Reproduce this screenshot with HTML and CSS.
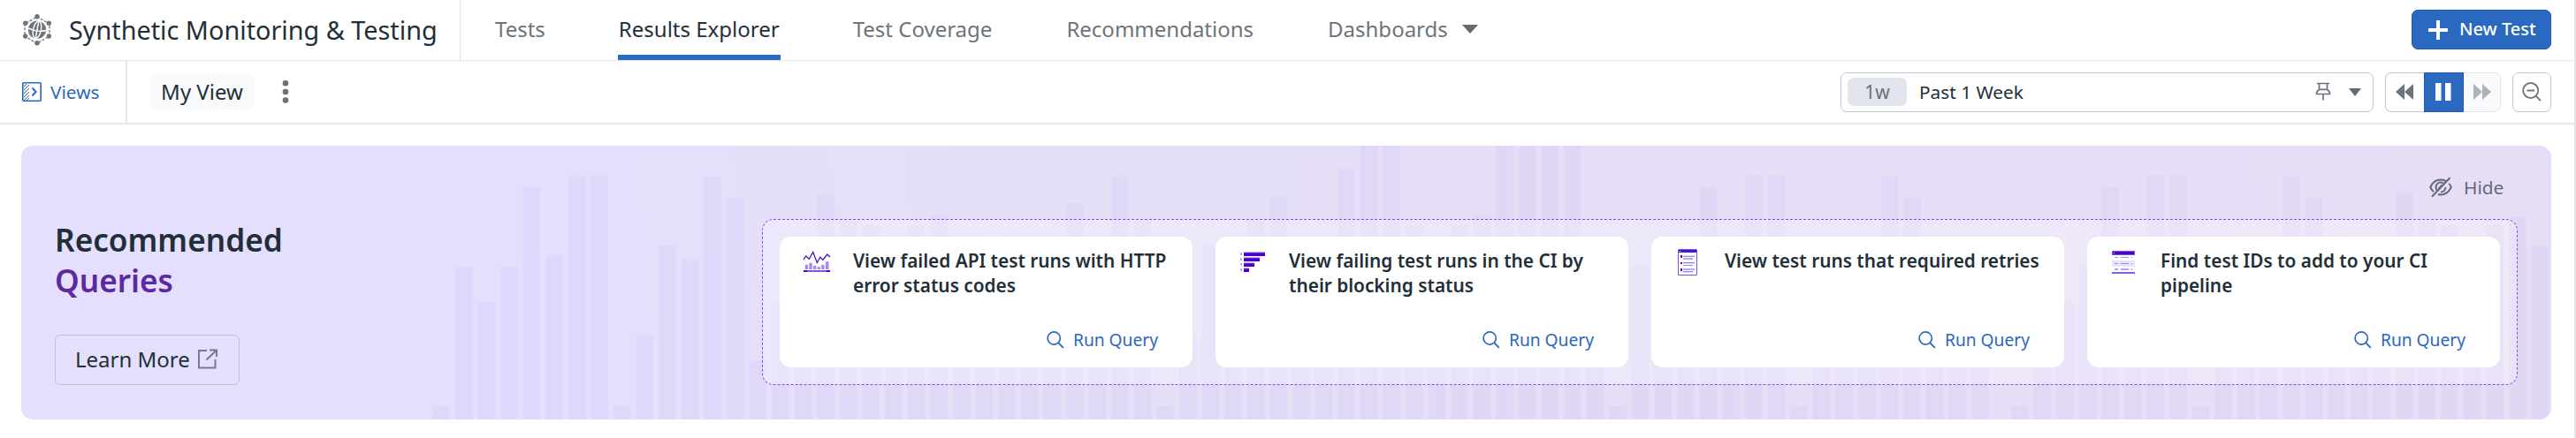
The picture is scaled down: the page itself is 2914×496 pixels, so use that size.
FILE: index.html
```html
<!DOCTYPE html>
<html lang="en">
<head>
<meta charset="utf-8">
<title>Synthetic Monitoring &amp; Testing</title>
<link rel="stylesheet" href="styles.css">
</head>
<body>
<svg class="defs" width="0" height="0">
  <symbol id="search" viewBox="0 0 20 20"><circle cx="8.2" cy="8" r="7.1" fill="none" stroke="currentColor" stroke-width="1.7"/><path d="M13.2 13.2L18.8 18.9" stroke="currentColor" stroke-width="1.9"/></symbol>
</svg>
<header class="topbar">
  <div class="brand">
    <svg class="brand-icon" width="34" height="38" viewBox="0 0 34 38">
      <path d="M17 4L31 12V26L17 34L3 26V12Z" fill="none" stroke="#6c747c" stroke-width="1.3" stroke-dasharray="3 1.6"/>
      <g fill="#6c747c"><circle cx="17" cy="3.7" r="2.7"/><circle cx="30.3" cy="11.3" r="2.7"/><circle cx="30.3" cy="26" r="2.7"/><circle cx="17" cy="33.7" r="2.7"/><circle cx="3.7" cy="26" r="2.7"/><circle cx="3.7" cy="11.3" r="2.7"/><circle cx="17" cy="18.7" r="10.2"/></g>
      <g fill="none" stroke="#fff" stroke-width="1.4"><ellipse cx="17" cy="18.7" rx="4.4" ry="10" transform="rotate(12 17 18.7)"/><path d="M19 8L15 29M7 17Q17 22 27 19.500"/></g>
    </svg>
    <h1 class="brand-title">Synthetic Monitoring &amp; Testing</h1>
  </div>
  <nav class="tabs">
    <a class="tab">Tests</a>
    <a class="tab active">Results Explorer</a>
    <a class="tab">Test Coverage</a>
    <a class="tab">Recommendations</a>
    <a class="tab">Dashboards<span class="caret"></span></a>
  </nav>
  <button class="new-test"><svg width="22" height="22" viewBox="0 0 22 22"><path d="M11 0V22M0 11H22" stroke="#fff" stroke-width="4"/></svg><span>New Test</span></button>
</header>
<div class="toolbar">
  <div class="views">
    <svg width="22" height="22" viewBox="0 0 22 22" fill="none" stroke="#2b68bf"><path d="M2 5L5 2M2 9L8 3M2 13L8 7M2 17L8 11M2 21L8 15M5 21L8 18" stroke-width="1"/><rect x=".8" y=".8" width="20.400" height="20.400" rx="1" stroke-width="1.600"/><path d="M11.500 6.500L15.500 11L11.500 15.500" stroke-width="2"/></svg>
    <span>Views</span>
  </div>
  <div class="my-view">My View</div>
  <svg class="kebab" width="8" height="28" viewBox="0 0 8 28" fill="#697077"><circle cx="4" cy="4.300" r="3.300"/><circle cx="4" cy="14" r="3.300"/><circle cx="4" cy="23.500" r="3.300"/></svg>
  <div class="time-select">
    <span class="pill">1w</span><span class="time-label">Past 1 Week</span>
    <svg class="pin" width="18" height="22" viewBox="0 0 18 22" fill="none" stroke="#6c747c" stroke-width="1.700"><path d="M2 1.500H16M4.500 1.500V8.500M13.500 1.500V8.500M4.500 8.300H13.500M4.500 8.500Q1.500 10 1.500 13.500H16.500Q16.500 10 13.500 8.500M9 13.500V20.500"/></svg>
    <span class="caret small"></span>
  </div>
  <div class="playback">
    <span class="pb"><svg width="20" height="20" viewBox="0 0 20 20" fill="#6c747c"><path d="M10 1V19L0 10ZM20 1V19L10 10Z"/></svg></span>
    <span class="pb on"><svg width="18" height="20" viewBox="0 0 18 20" fill="#fff"><path d="M0 0H6.500V20H0ZM11 0H17.500V20H11Z"/></svg></span>
    <span class="pb off"><svg width="20" height="20" viewBox="0 0 20 20" fill="#adb2b6"><path d="M0 1V19L10 10ZM10 1V19L20 10Z"/></svg></span>
  </div>
  <div class="zoom-out"><svg width="22" height="22" viewBox="0 0 22 22" fill="none" stroke="#6c747c" stroke-width="1.800"><circle cx="9.700" cy="9.500" r="8.500"/><path d="M5.500 9.500H14M15.800 15.700L21 21.200"/></svg></div>
</div>
<main class="content">
  <section class="banner">
    <svg class="bars" id="bars" width="2862" height="310" viewBox="24 165 2862 310"></svg>
    <div class="intro">
      <h2>Recommended<br><em>Queries</em></h2>
      <a class="learn">Learn More<svg width="22" height="23" viewBox="0 0 22 23" fill="none" stroke="#777a8c" stroke-width="2"><path d="M10 2H1V21.500H19.500V12M13 1.500H21V9M20.500 2L9.500 12.500"/></svg></a>
    </div>
    <div class="main">
      <div class="hide"><svg width="26" height="24" viewBox="0 0 26 24" fill="none" stroke="#646a7b" stroke-width="2"><path d="M19.500 5.600Q16.800 3.500 13 3.500C7 3.500 3 8 1.200 12Q2.500 15 5 17.200M10 20Q11.500 20.500 13 20.500C19 20.500 23 16 24.800 12Q24 9.800 22.300 7.900M3 22.700L23.500 1.300M8.800 16Q7.500 14.300 7.500 12A5.500 5.500 0 0 1 15.800 7.300M18.500 12A5.500 5.500 0 0 1 13 17.500M10.500 14L14.500 9.500"/></svg><span>Hide</span></div>
      <div class="queries">
        <article class="card">
          <svg class="card-icon" width="40" height="40" viewBox="0 0 40 40"><path d="M7 19L9.700 15L13.300 18.300L17.700 10.500L22.300 22.500L25.800 16.300L28.900 19.200L33.800 13L36.800 16" fill="none" stroke="#4a0fc4" stroke-width="1.300"/><path d="M8.800 24.700h3.300V30h-3.300zM13.300 22.700h3.500V30h-3.500zM18 26h3.300V30H18zM22.600 27.300h3.300V30h-3.300zM27.100 24.700h3.500V30h-3.500zM32 21.300h3.500V30H32z" fill="#a08bf8"/><path d="M7 31H37V33H7Z" fill="#8a50e0"/><path d="M7 31h4v2H7zM33 31h4v2h-4z" fill="#4a00cc"/></svg>
          <h3>View failed API test runs with HTTP error status codes</h3>
          <a class="run"><svg width="20" height="20"><use href="#search"/></svg>Run Query</a>
        </article>
        <article class="card">
          <svg class="card-icon" width="40" height="40" viewBox="0 0 40 40"><path d="M12 11h24v4H12zM12 17h18v4H12zM12 23h12v4H12zM12 29h6v4h-6z" fill="#4a00cc"/><path d="M12 11h24M12 17h18M12 23h12M12 29h6" stroke="#8253dd" stroke-width="1"/><path d="M8 11h2v3H8zM8 17h2v3H8zM8 23h2v3H8zM8 29h2v3H8z" fill="#b9aaf8"/></svg>
          <h3>View failing test runs in the CI by their blocking status</h3>
          <a class="run"><svg width="20" height="20"><use href="#search"/></svg>Run Query</a>
        </article>
        <article class="card">
          <svg class="card-icon" width="40" height="40" viewBox="0 0 40 40"><rect x="10.500" y="7.500" width="21" height="29" rx=".5" fill="#fff" stroke="#7b50d8"/><path d="M11 8H31V11H11Z" fill="#4617c4"/><path d="M12 9h1v1h-1z" fill="#fff"/><path d="M13 14h2v3h-2zM13 22h2v2h-2zM13 29h2v3h-2z" fill="#4a00cc"/><path d="M16 15h13v1H16zM16 22h13v1H16zM16 25h11v1H16zM16 32h11v1H16z" fill="#9580f5"/><path d="M16 17h11v2H16zM16 29h13v2H16z" fill="#b7a9fa"/><path d="M16 14h13v1H16zM16 23h13v1H16zM16 33h11v1H16z" fill="#ddd6fd"/></svg>
          <h3>View test runs that required retries</h3>
          <a class="run"><svg width="20" height="20"><use href="#search"/></svg>Run Query</a>
        </article>
        <article class="card">
          <svg class="card-icon" width="40" height="40" viewBox="0 0 40 40"><path d="M8 9H34V14H8Z" fill="#8253dd"/><path d="M9 10H33V13H9Z" fill="#4a00cc"/><path d="M10 11h1v1h-1z" fill="#fff"/><path d="M8 20H34V27H8Z" fill="#e7e2fe"/><path d="M11 16.500h4M18 16.500h9M30 16.500h1M11 23.500h4M18 23.500h9M30 23.500h1" stroke="#a08cf7" stroke-width="1"/><path d="M11 30h4M18 30h9M30 30h1" stroke="#b0a0fa" stroke-width="2"/><path d="M8 33H34V35H8Z" fill="#8a5bdb"/></svg>
          <h3>Find test IDs to add to your CI pipeline</h3>
          <a class="run"><svg width="20" height="20"><use href="#search"/></svg>Run Query</a>
        </article>
      </div>
    </div>
  </section>
</main>
<script src="bars.js"></script>
</body>
</html>
```
FILE: bars.js
```js
// Decorative histogram behind the banner: each value is the top of one bar.
const head = [460, 302, 342, 302, 212, 289, 199, 199, 460, 379, 278, 293, 200, 224, 409, 342, 300, 219, 248, 255, 300, 255, 245, 278];
const tile = head.concat([
  300, 300, 300, 300, 230, 300, 199, 248, 460, 379, 278, 293, 250, 223, 300, 300, 191, 165, 165, 255, 300, 255, 245,
  165, 165, 165, 165, 342, 460, 302, 342, 302, 212, 289, 199, 199, 460, 379, 278, 293, 200, 224, 409, 342, 300
]);
const bars = document.getElementById("bars");
function draw(tops, start) {
  tops.forEach((top, i) => {
    const r = document.createElementNS("http://www.w3.org/2000/svg", "rect");
    r.setAttribute("x", start + i * 25.6);
    r.setAttribute("y", top);
    r.setAttribute("width", 19.4);
    r.setAttribute("height", 475 - top);
    bars.appendChild(r);
  });
}
draw(tile, 489.2);
draw(head, 2275);
```
FILE: styles.css
```css
* { box-sizing: border-box; }
body { margin: 0; width: 2914px; height: 496px; background: #fff; border-right: 2px solid #e6e6ea; font-family: "Noto Sans", sans-serif; color: #232f38; overflow: hidden; }
h1, h2, h3 { margin: 0; font-weight: inherit; }
svg { display: block; flex: none; }
.defs { position: absolute; }

.topbar { display: flex; height: 69px; border-bottom: 1px solid #e0e2ec; padding-right: 26px; align-items: stretch; }
.brand { display: flex; width: 521px; border-right: 1px solid #e0e2ec; padding-left: 25px; align-items: center; }
.brand-icon { margin-right: 19px; }
.brand-title { font-size: 28.8px; line-height: 68px; white-space: nowrap; }
.tabs { display: flex; flex: 1; gap: 80px; padding-left: 37px; }
.tab { display: flex; align-items: center; height: 68px; padding: 4px 2px 0; font-size: 24px; line-height: 54px; color: #6c747c; border-bottom: 6px solid transparent; white-space: nowrap; }
.tab.active { padding: 4px 1px 0; color: #232f38; border-color: #2b68bf; }
.caret { margin-left: 16px; border: 9px solid transparent; border-top: 10px solid #606b73; border-bottom: 0; }
.caret.small { margin: 1px 13px 0 20px; border-width: 9px 7px 0; }
.new-test { display: flex; align-items: center; gap: 13px; width: 158px; height: 45px; margin-top: 11px; padding: 0 0 0 18px; border: 1px solid #2257b4; border-radius: 7px; background: #2b68bf; color: #fff; font: 500 20px "Noto Sans", sans-serif; white-space: nowrap; }
.new-test span { margin-top: -2px; }

.toolbar { display: flex; align-items: center; height: 72px; border-bottom: 2px solid #e5e6ee; padding-right: 26px; }
.views { display: flex; align-items: center; align-self: stretch; gap: 10px; width: 144px; padding-left: 25px; border-right: 2px solid #e5e6ee; color: #2b68bf; font-size: 20.8px; }
.my-view { margin-left: 25px; width: 119px; height: 40px; border-radius: 8px; background: #f9fafc; font-size: 24px; line-height: 40px; text-align: center; white-space: nowrap; }
.kebab { margin-left: 31px; }
.time-select { display: flex; align-items: center; width: 603px; height: 45px; margin-left: auto; padding-left: 7px; border: 1px solid #c3c5da; border-radius: 7px; }
.pill { width: 67px; height: 32px; border-radius: 7px; background: #e2e5ed; color: #697077; font-size: 21px; line-height: 32px; text-align: center; }
.time-label { margin-left: 14px; font-size: 20.8px; }
.pin { margin-left: auto; }
.playback { display: flex; width: 131px; height: 45px; margin-left: 13px; }
.pb { display: flex; flex: 1; align-items: center; justify-content: center; border: 1px solid #c3c5da; border-right: 0; border-radius: 7px 0 0 7px; padding-right: 2px; }
.pb.on { flex: 0 0 45px; padding-right: 1px; background: #2b68bf; border: 1px solid #2257b4; border-radius: 0; }
.pb.off { padding-right: 0; background: #f9fafc; border: 1px solid #e4e6ef; border-left: 0; border-radius: 0 7px 7px 0; }
.zoom-out { display: flex; align-items: center; justify-content: center; width: 44px; height: 45px; margin-left: 13px; border: 1px solid #c3c5da; border-radius: 7px; }

.content { padding: 24px 26px 0 24px; }
.banner { position: relative; display: flex; height: 310px; border-radius: 13px; overflow: hidden; background: linear-gradient(80deg, #e4dffe 0%, #e4dffd 22%, #e5dff8 34%, #e6def7 60%, #e7def6 100%); }
.bars { position: absolute; inset: 0; fill: rgba(88, 80, 240, .045); }
.intro { position: relative; width: 838px; padding: 83px 0 0 38px; }
.intro h2 { font-size: 35.2px; font-weight: 600; line-height: 46px; }
.intro em { font-style: normal; color: #5b2aa3; }
.learn { display: flex; align-items: center; gap: 9px; width: 209px; height: 57px; margin-top: 39px; padding: 0 0 2px 22px; border: 1px solid #c0bfd8; border-radius: 6px; font-size: 24px; white-space: nowrap; }
.main { position: relative; width: 1986px; }
.hide { display: flex; align-items: center; gap: 13px; height: 28px; margin: 33px 0 22px; padding-left: 1886px; color: #646a7b; font-size: 20.8px; }
.queries { display: grid; grid-template-columns: repeat(4, 467px); gap: 26px; height: 188px; padding: 19px; border: 1px dashed #8f45f0; border-radius: 13px; background: rgba(255, 255, 255, .3); }
.card { display: grid; grid-template-columns: 63px 1fr; grid-template-rows: 90px 28px; padding: 13px 20px 0; height: 148px; border-radius: 13px; background: #fff; }
.card-icon { margin-top: -6px; }
.card h3 { font-size: 20.8px; font-weight: 600; line-height: 28px; }
.run { grid-column: 2; display: flex; justify-content: flex-end; align-items: center; gap: 10px; padding-right: 19px; color: #2b68bf; font-size: 19.2px; line-height: 28px; }
```
